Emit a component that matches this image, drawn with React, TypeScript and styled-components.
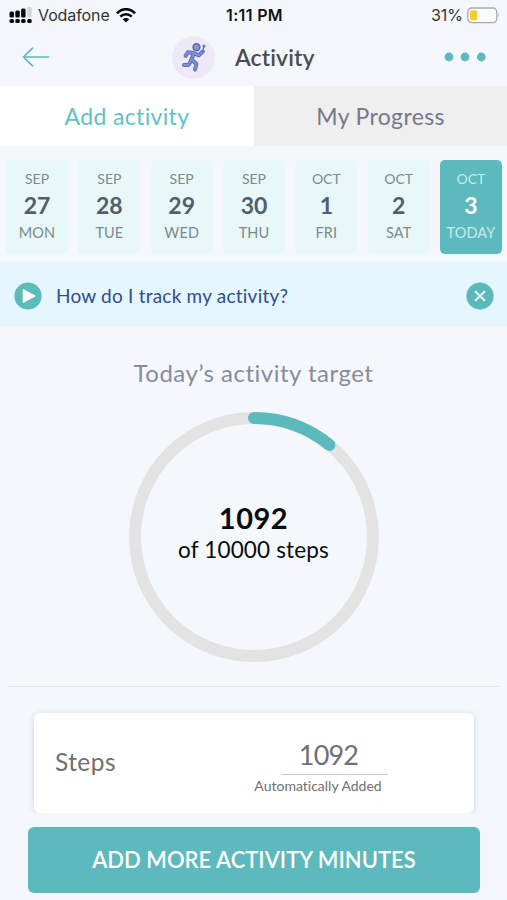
import React from "react";
import styled, { createGlobalStyle } from "styled-components";

const teal = "#5cb9bd";

const GlobalStyle = createGlobalStyle`
  *, *::before, *::after { box-sizing: border-box; }
  body { margin: 0; background: #f4f8fc; font-family: Lato, "Noto Sans", sans-serif; font-variant-ligatures: none; }
  button { font: inherit; border: 0; padding: 0; background: none; }
  svg { display: block; }
`;

const Screen = styled.main`
  width: 507px;
  height: 900px;
  overflow: hidden;
  display: flex;
  flex-direction: column;
  background: #f4f8fc;
`;

const StatusBar = styled.div`
  height: 30px;
  display: grid;
  grid-template-columns: 1fr auto 1fr;
  align-items: center;
  padding: 0 7px 0 9px;
  font-family: Inter, sans-serif;
  font-size: 16px;
  line-height: 30px;
  color: #333;
`;

const Carrier = styled.div`
  display: flex;
  align-items: center;
  gap: 5px;
`;

const CarrierName = styled.span`
  letter-spacing: -0.1px;
  margin-right: 1px;
`;

const Clock = styled.span`
  font-weight: 600;
  color: #111;
  letter-spacing: 0.35px;
`;

const Power = styled.div`
  display: flex;
  align-items: center;
  justify-content: flex-end;
  gap: 4px;
`;

const Header = styled.header`
  height: 56px;
  display: flex;
  align-items: center;
  padding: 0 21px 2px 22px;
`;

const IconButton = styled.button`
  display: flex;
`;

const Avatar = styled.div`
  width: 43px;
  height: 43px;
  margin-left: 122px;
  border-radius: 50%;
  background: #eee9f8;
  display: grid;
  place-items: center;
`;

const Title = styled.h1`
  margin: 0 auto 0 20px;
  font-size: 23px;
  line-height: 30px;
  font-weight: 600;
  letter-spacing: 0.1px;
  color: #4c4c50;
`;

const Tabs = styled.nav`
  display: grid;
  grid-template-columns: 254px 1fr;
  height: 60px;
`;

const Tab = styled.button<{ $active?: boolean }>`
  font-size: 23px;
  letter-spacing: 0.35px;
  color: ${(p) => (p.$active ? "#5fc3c3" : "#77778a")};
  background: ${(p) => (p.$active ? "#fff" : "#efeff0")};
`;

const Days = styled.div`
  display: grid;
  grid-template-columns: repeat(7, 62px);
  justify-content: space-between;
  padding: 14px 5px 8px 6px;
`;

const Day = styled.button<{ $selected?: boolean }>`
  height: 94px;
  border-radius: 5px;
  display: flex;
  flex-direction: column;
  align-items: center;
  padding-top: 9px;
  color: ${(p) => (p.$selected ? "#c5ecec" : "#7c898e")};
  background: ${(p) => (p.$selected ? teal : "#e8f8f8")};
`;

const Month = styled.span`
  font-size: 14px;
  line-height: 20px;
`;

const DayNumber = styled.span<{ $selected?: boolean }>`
  font-size: 23px;
  font-weight: 700;
  line-height: 32px;
  color: ${(p) => (p.$selected ? "#fff" : "#525e6d")};
`;

const Weekday = styled.span`
  font-size: 14.5px;
  line-height: 24px;
  letter-spacing: 0.1px;
`;

const Banner = styled.aside`
  height: 65px;
  display: flex;
  align-items: center;
  padding: 3px 13px 0 14px;
  background: #e6f6fe;
`;

const Question = styled.span`
  margin: 0 auto 0 14px;
  padding-bottom: 2px;
  font-size: 19px;
  letter-spacing: 0.22px;
  color: #2d4f87;
`;

const Target = styled.section`
  height: 359px;
  display: flex;
  flex-direction: column;
  align-items: center;
  padding-top: 29px;
`;

const TargetTitle = styled.h2`
  margin: 0 0 21.5px;
  font-size: 24px;
  font-weight: 400;
  line-height: 34px;
  letter-spacing: 0.5px;
  color: #8a8b9b;
`;

const Ring = styled.div`
  display: grid;
  place-items: center;
  & > * { grid-area: 1 / 1; }
`;

const RingText = styled.div`
  text-align: center;
  color: #0b0b0d;
  padding-bottom: 6px;
`;

const StepCount = styled.div`
  font-size: 29px;
  font-weight: 700;
  line-height: 32px;
  letter-spacing: 0.5px;
`;

const StepGoal = styled.div`
  font-size: 22.5px;
  line-height: 31px;
  letter-spacing: 0.15px;
`;

const Entries = styled.section`
  height: 127px;
  margin: 0 7px 0 8px;
  padding: 26px 26px 0;
  border-top: 1px solid #e2e6ea;
  overflow: hidden;
`;

const EntryCard = styled.div`
  height: 100px;
  border-radius: 6px;
  background: #fff;
  box-shadow: 0 1px 7px rgba(80, 90, 150, 0.22);
  display: flex;
  justify-content: space-between;
  padding: 0 88px 0 21px;
`;

const EntryName = styled.span`
  font-size: 24.5px;
  line-height: 98px;
  letter-spacing: 0.45px;
  color: #707072;
`;

const EntryValue = styled.div`
  width: 136px;
  display: flex;
  flex-direction: column;
  align-items: center;
  color: #707072;
`;

const ValueField = styled.div`
  width: 107px;
  height: 62px;
  padding-top: 22px;
  margin-left: 33px;
  border-bottom: 1px solid #c9c9cb;
  text-align: center;
  font-size: 27px;
  line-height: 40px;
  padding-right: 12px;
  letter-spacing: -0.8px;
`;

const ValueNote = styled.span`
  font-size: 14px;
  line-height: 22px;
  white-space: nowrap;
`;

const PrimaryButton = styled.button`
  flex: none;
  height: 66px;
  margin: 14px 27px 0 28px;
  padding-bottom: 2px;
  border-radius: 6px;
  background: ${teal};
  color: #fff;
  font-size: 22px;
  font-weight: 600;
`;

const days = [
  ["SEP", "27", "MON"],
  ["SEP", "28", "TUE"],
  ["SEP", "29", "WED"],
  ["SEP", "30", "THU"],
  ["OCT", "1", "FRI"],
  ["OCT", "2", "SAT"],
  ["OCT", "3", "TODAY"],
];

const SignalIcon = () => (
  <svg width="24" height="17" viewBox="0 0 24 17" fill="#080808">
    <rect x="0.5" y="4.5" width="4.5" height="6" rx="1.5" />
    <rect x="6.3" y="3.5" width="4.5" height="7" rx="1.5" />
    <rect x="12.1" y="1.5" width="4.5" height="9" rx="1.5" />
    <rect x="18.2" y="0" width="4.5" height="10.5" rx="1.5" fill="#d2d4d8" />
    {[0.5, 6.3, 12.1, 18.2].map((x) => (
      <rect key={x} x={x} y="12" width="4.5" height="4" rx="1.5" />
    ))}
  </svg>
);

const WifiIcon = () => (
  <svg width="20" height="15" viewBox="0 0 20 15" fill="none" stroke="#080808">
    <path d="M1 5.3C6-.1 14-.1 19 5.3" strokeWidth="2.7" />
    <path d="M4.3 8.6c3.2-3.3 8.2-3.3 11.4 0" strokeWidth="2.5" />
    <path d="M10 14.6 6.7 11.3q3.3-2.6 6.6 0z" fill="#080808" stroke="none" />
  </svg>
);

const BatteryIcon = () => (
  <svg width="33" height="17" viewBox="0 0 33 17">
    <rect x="0.8" y="1" width="29" height="14.6" rx="4" fill="#f9fbfc" stroke="#a8abae" strokeWidth="1.3" />
    <rect x="3" y="3.3" width="7.3" height="10" rx="1.8" fill="#f4cc35" />
    <path d="M31.2 6q1.6 2.3 0 4.6z" fill="#a8abae" />
  </svg>
);

const BackIcon = () => (
  <svg width="28" height="20" viewBox="0 0 28 20" fill="none" stroke={teal} strokeWidth="1.7" strokeLinecap="round" strokeLinejoin="round">
    <path d="M10.5 1.2 1.5 10l9 8.8M1.5 10h25" />
  </svg>
);

const RunnerIcon = () => (
  <svg width="26" height="30" viewBox="0 0 26 30" fill="none" strokeLinecap="round" strokeLinejoin="round">
    <g stroke="#5a6db8" strokeWidth="4">
      <path d="M12.8 11.5 10 18.5M12.5 11 7 10.2 4.6 13.8M13.5 11.5l4.3 1.8 4-3.8M10.2 18.5 7.5 23H3M11 18l4.4 4-1.4 5.5" />
    </g>
    <g stroke="#8292d2" strokeWidth="1.9">
      <path d="M12.8 11.5 10 18.5M12.5 11 7 10.2 4.6 13.8M13.5 11.5l4.3 1.8 4-3.8M10.2 18.5 7.5 23H3M11 18l4.4 4-1.4 5.5" />
    </g>
    <circle cx="15.5" cy="5.2" r="3.4" fill="#8c97d2" stroke="#5568b2" strokeWidth="1.5" />
    <path d="m21.8 9.5 1-5.2" stroke="#5a6db8" strokeWidth="1.3" />
    <circle cx="23" cy="4" r="1.6" fill="#4f83b5" />
  </svg>
);

const MoreIcon = () => (
  <svg width="42" height="10" viewBox="0 0 42 10" fill={teal}>
    <circle cx="5" cy="5" r="4.4" />
    <circle cx="21" cy="5" r="4.4" />
    <circle cx="37.3" cy="5" r="4.4" />
  </svg>
);

const PlayIcon = () => (
  <svg width="28" height="28" viewBox="0 0 28 28">
    <circle cx="14" cy="14" r="13.6" fill="#5cbcba" />
    <path d="M9.2 7.5v13L21.3 14z" fill="#fff" stroke="#fff" strokeLinejoin="round" />
  </svg>
);

const CloseIcon = () => (
  <svg width="28" height="28" viewBox="0 0 28 28">
    <circle cx="14" cy="14" r="13.6" fill="#5cb9ba" />
    <path d="m9.7 9.7 8.6 8.6m0-8.6-8.6 8.6" stroke="#eafaff" strokeWidth="2" strokeLinecap="round" />
  </svg>
);

const ProgressRing = ({ value }: { value: number }) => (
  <svg width="250" height="250" viewBox="0 0 250 250" fill="none" strokeWidth="12">
    <circle cx="125" cy="125" r="119" stroke="#e3e3e4" />
    <circle
      cx="125"
      cy="125"
      r="119"
      stroke={teal}
      strokeLinecap="round"
      pathLength="1"
      strokeDasharray={`${value} 2`}
      transform="rotate(-90 125 125)"
    />
  </svg>
);

export default function App() {
  return (
    <Screen>
      <GlobalStyle />
      <StatusBar>
        <Carrier>
          <SignalIcon />
          <CarrierName>Vodafone</CarrierName>
          <WifiIcon />
        </Carrier>
        <Clock>1:11 PM</Clock>
        <Power>
          <span>31%</span>
          <BatteryIcon />
        </Power>
      </StatusBar>
      <Header>
        <IconButton aria-label="Back"><BackIcon /></IconButton>
        <Avatar><RunnerIcon /></Avatar>
        <Title>Activity</Title>
        <IconButton aria-label="More"><MoreIcon /></IconButton>
      </Header>
      <Tabs>
        <Tab $active>Add activity</Tab>
        <Tab>My Progress</Tab>
      </Tabs>
      <Days>
        {days.map(([month, date, weekday]) => {
          const selected = weekday === "TODAY";
          return (
            <Day key={date} $selected={selected}>
              <Month>{month}</Month>
              <DayNumber $selected={selected}>{date}</DayNumber>
              <Weekday>{weekday}</Weekday>
            </Day>
          );
        })}
      </Days>
      <Banner>
        <PlayIcon />
        <Question>How do I track my activity?</Question>
        <IconButton aria-label="Close"><CloseIcon /></IconButton>
      </Banner>
      <Target>
        <TargetTitle>Today’s activity target</TargetTitle>
        <Ring>
          <ProgressRing value={0.1092} />
          <RingText>
            <StepCount>1092</StepCount>
            <StepGoal>of 10000 steps</StepGoal>
          </RingText>
        </Ring>
      </Target>
      <Entries>
        <EntryCard>
          <EntryName>Steps</EntryName>
          <EntryValue>
            <ValueField>1092</ValueField>
            <ValueNote>Automatically Added</ValueNote>
          </EntryValue>
        </EntryCard>
      </Entries>
      <PrimaryButton>ADD MORE ACTIVITY MINUTES</PrimaryButton>
    </Screen>
  );
}
